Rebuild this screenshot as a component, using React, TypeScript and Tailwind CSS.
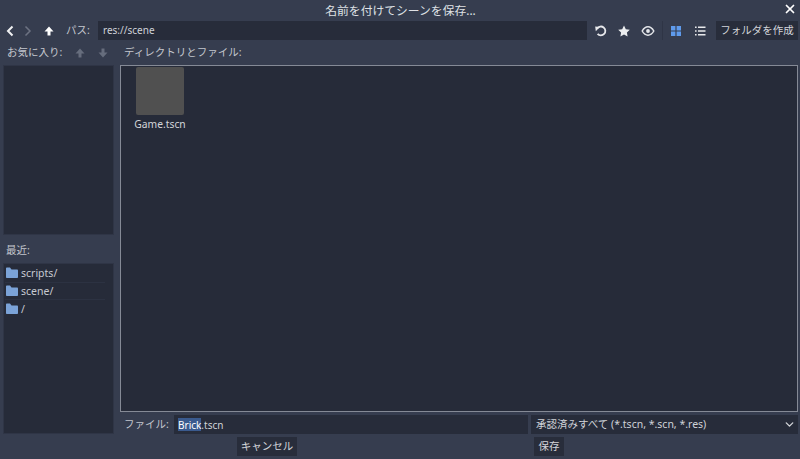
import { ChevronDown, X } from "lucide-react";

const recent = ["scripts/", "scene/", "/"];

function FolderIcon() {
    return (
        <svg width="14" height="12" viewBox="0 0 14 12" className="shrink-0">
            <path d="M1 1.5 C1 .8 1.5.5 2 .5 H5 L6.5 2.5 H12 C12.6 2.5 13 3 13 3.5 V10 C13 10.6 12.6 11 12 11 H2 C1.4 11 1 10.6 1 10 Z" fill="#7ba3d8" />
        </svg>
    );
}

function ArrowUp({ className = "" }: { className?: string }) {
    return (
        <svg width="12" height="12" viewBox="0 0 12 12" className={className}>
            <path d="M6 1.5 L10.5 6.5 H7.5 V10.5 H4.5 V6.5 H1.5 Z" fill="currentColor" />
        </svg>
    );
}

export default function App() {
    return (
        <div
            className="w-[800px] h-[459px] bg-[#363d4f] text-[#d3d5da] text-[10.5px] leading-none flex flex-col overflow-hidden"
            style={{ fontFamily: '"Noto Sans", "Noto Sans CJK JP", sans-serif' }}
        >
            {/* title */}
            <div className="h-[21px] relative flex items-center justify-center text-[11.8px] text-[#dfe1e5]">
                <span className="pl-[1px]">名前を付けてシーンを保存...</span>
                <X className="absolute right-[3px] top-[2px] w-[14px] h-[14px] text-white" strokeWidth={3} />
            </div>

            {/* path bar */}
            <div className="h-[19px] flex items-center pl-[6px] pr-[2px]">
                <svg width="8" height="12" viewBox="0 0 8 12"><path d="M6.5 1.5 L2 6 L6.5 10.5" fill="none" stroke="#f0f1f3" strokeWidth="2" /></svg>
                <svg width="8" height="12" viewBox="0 0 8 12" className="ml-[10px]"><path d="M1.5 1.5 L6 6 L1.5 10.5" fill="none" stroke="#6d7382" strokeWidth="1.5" /></svg>
                <ArrowUp className="ml-[11px] text-white" />
                <span className="ml-[11px] w-[32px] text-[#c4c7ce] pb-[1px]">パス:</span>
                <div className="w-[489px] h-[19px] bg-[#272c3a] flex items-center pl-[5px] pb-[1px] text-[10px] text-[#cfd2d8]">res://scene</div>
                <svg width="14" height="14" viewBox="0 0 14 14" className="ml-[7px]">
                    <path d="M3.2 4.6 A4.4 4.4 0 1 1 3.6 9.8" fill="none" stroke="#e8e9ec" strokeWidth="1.8" />
                    <path d="M1.2 2.6 L5.8 3 L1.8 7.2 Z" fill="#e8e9ec" />
                </svg>
                <svg width="14" height="14" viewBox="0 0 14 14" className="ml-[9px]">
                    <path d="M7 1.5 L8.8 5.2 L12.8 5.7 L9.9 8.5 L10.6 12.5 L7 10.6 L3.4 12.5 L4.1 8.5 L1.2 5.7 L5.2 5.2 Z" fill="#eceef0" />
                </svg>
                <svg width="14" height="14" viewBox="0 0 14 14" className="ml-[10px]">
                    <path d="M1.2 7 C3 3.8 5 2.8 7 2.8 C9 2.8 11 3.8 12.8 7 C11 10.2 9 11.2 7 11.2 C5 11.2 3 10.2 1.2 7 Z" fill="none" stroke="#e4e6ea" strokeWidth="1.5" />
                    <circle cx="7" cy="7" r="1.9" fill="#e4e6ea" />
                </svg>
                <div className="ml-[7px] w-px h-[19px] bg-[#2f3546]" />
                <svg width="12" height="12" viewBox="0 0 12 12" className="ml-[7px]">
                    <path d="M1 1 H5.4 V5.4 H1 Z M6.6 1 H11 V5.4 H6.6 Z M1 6.6 H5.4 V11 H1 Z M6.6 6.6 H11 V11 H6.6 Z" fill="#5f9bec" />
                </svg>
                <svg width="12" height="12" viewBox="0 0 12 12" className="ml-[12px]">
                    <path d="M1 1.5 H2.6 V3.1 H1 Z M4 1.5 H11.5 V3.1 H4 Z M1 5.2 H2.6 V6.8 H1 Z M4 5.2 H11.5 V6.8 H4 Z M1 8.9 H2.6 V10.5 H1 Z M4 8.9 H11.5 V10.5 H4 Z" fill="#e8e9ec" />
                </svg>
                <button className="ml-[10px] w-[82px] h-[19px] bg-[#282d3b] flex items-center justify-center text-[#d3d5da]">フォルダを作成</button>
            </div>

            {/* labels */}
            <div className="h-[25px] flex items-center pl-[7px] text-[#c4c7ce]">
                <span className="w-[67px]">お気に入り:</span>
                <ArrowUp className="text-[#666d7d]" />
                <ArrowUp className="ml-[11px] rotate-180 text-[#666d7d]" />
                <span className="ml-[15px]">ディレクトリとファイル:</span>
            </div>

            {/* body */}
            <div className="h-[347px] flex pl-[3px] pr-[2px]">
                <div className="w-[111px] flex flex-col">
                    <div className="h-[170px] bg-[#262b39] border border-[#2f3546]" />
                    <div className="h-[28px] flex items-center pl-[3px] pt-[2px] text-[#c4c7ce]">最近:</div>
                    <div className="flex-1 bg-[#262b39] border border-[#2f3546] -mb-[22px] pt-[1px] pl-[1px] pr-[8px]">
                        {recent.map((name) => (
                            <div key={name} className="h-[17.5px] flex items-center gap-[2px] border-b border-[#2c3242] last:border-b-0 text-[#c7cad1]">
                                <FolderIcon />
                                <span>{name}</span>
                            </div>
                        ))}
                    </div>
                </div>
                <div className="ml-[6px] flex-1 bg-[#262b39] border border-[#858a96] pl-[15px] pt-[1px]">
                    <div className="w-[48px] flex flex-col items-center">
                        <div className="w-[48px] h-[48px] rounded-[2px] bg-[#505050] shrink-0" />
                        <span className="mt-[4px] whitespace-nowrap text-[10.3px] text-[#d3d5da]">Game.tscn</span>
                    </div>
                </div>
            </div>

            {/* file row */}
            <div className="mt-[3px] h-[19px] flex items-center pl-[124px] pr-[2px]">
                <span className="w-[50px] text-[#c4c7ce]">ファイル:</span>
                <div className="w-[354px] h-[19px] bg-[#272c3a] flex items-center pl-[4px] text-[10px] text-[#cfd2d8]">
                    <span className="bg-[#3a5a8e] text-white h-[13px] flex items-center">Brick</span>.tscn
                </div>
                <div className="ml-[3px] flex-1 h-[19px] bg-[#272c3a] flex items-center justify-between pl-[5px] pr-[2px] text-[#cfd2d8]">
                    <span>承認済みすべて (*.tscn, *.scn, *.res)</span>
                    <ChevronDown className="w-[13px] h-[13px] text-[#d3d5da]" strokeWidth={2.5} />
                </div>
            </div>

            {/* buttons */}
            <div className="mt-[3px] h-[19px] flex pl-[237px]">
                <button className="w-[60px] h-[19px] bg-[#282d3b] flex items-center justify-center text-[#d3d5da]">キャンセル</button>
                <button className="ml-[237px] w-[30px] h-[19px] bg-[#282d3b] flex items-center justify-center text-[#d3d5da]">保存</button>
            </div>
        </div>
    );
}
